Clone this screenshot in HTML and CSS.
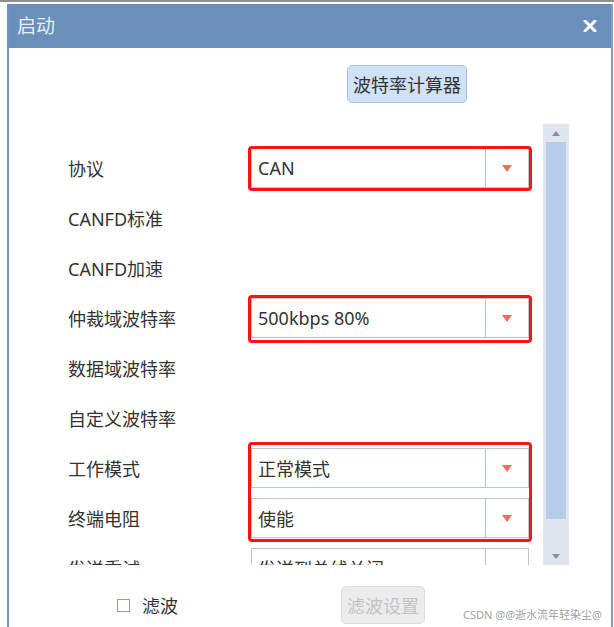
FILE: index.html
```html
<!DOCTYPE html>
<html lang="zh-CN">
<head>
    <meta charset="UTF-8">
    <meta name="viewport" content="width=device-width, initial-scale=1.0">
    <title>启动</title>
    <link rel="stylesheet" href="styles.css">
</head>
<body>
    <div class="top-line"></div>

    <div class="window">
        <div class="title-bar">
            <span class="title">启动</span>
            <svg class="close" width="14" height="12" viewBox="0 0 14 12">
                <path d="M2 1 L12 11 M12 1 L2 11" stroke="#ffffff" stroke-width="3" stroke-linecap="round"/>
            </svg>
        </div>

        <div class="window-body">
            <div class="toolbar">
                <button class="calc-btn">波特率计算器</button>
            </div>

            <div class="scroll-area">
                <div class="form">
                    <div class="row">
                        <span class="label">协议</span>
                        <div class="combo"><span class="value">CAN</span><span class="drop"><i class="arrow"></i></span></div>
                    </div>
                    <div class="row">
                        <span class="label">CANFD标准</span>
                    </div>
                    <div class="row">
                        <span class="label">CANFD加速</span>
                    </div>
                    <div class="row">
                        <span class="label">仲裁域波特率</span>
                        <div class="combo"><span class="value">500kbps 80%</span><span class="drop"><i class="arrow"></i></span></div>
                    </div>
                    <div class="row">
                        <span class="label">数据域波特率</span>
                    </div>
                    <div class="row">
                        <span class="label">自定义波特率</span>
                    </div>
                    <div class="row">
                        <span class="label">工作模式</span>
                        <div class="combo"><span class="value">正常模式</span><span class="drop"><i class="arrow"></i></span></div>
                    </div>
                    <div class="row">
                        <span class="label">终端电阻</span>
                        <div class="combo"><span class="value">使能</span><span class="drop"><i class="arrow"></i></span></div>
                    </div>
                    <div class="row">
                        <span class="label">发送重试</span>
                        <div class="combo"><span class="value">发送到总线关闭</span><span class="drop"><i class="arrow"></i></span></div>
                    </div>

                    <!-- red annotation boxes -->
                    <div class="mark mark-1"></div>
                    <div class="mark mark-2"></div>
                    <div class="mark mark-3"></div>
                </div>

                <div class="scrollbar">
                    <span class="sb-up"></span>
                    <div class="sb-thumb"></div>
                    <span class="sb-down"></span>
                </div>
            </div>

            <div class="footer">
                <label class="check"><span class="box"></span>滤波</label>
                <button class="filter-btn" disabled>滤波设置</button>
            </div>
        </div>
    </div>

    <div class="watermark">CSDN @@逝水流年轻染尘@</div>
</body>
</html>
```

FILE: styles.css
```css
body {
    margin: 0;
    background-color: #ffffff;
    font-family: 'Noto Sans', 'Noto Sans CJK SC', sans-serif;
    color: #333333;
    width: 614px;
    height: 627px;
    overflow: hidden;
    position: relative;
}

.top-line {
    height: 2px;
    background-color: #8e8e8e;
}

.window {
    margin: 2px 0 0 7px;
    width: 606px;
    height: 623px;
    border-left: 2px solid #6f93bf;
    border-right: 2px solid #8a9cb8;
    box-sizing: border-box;
}

.title-bar {
    height: 44px;
    background-color: #6a8fba;
    display: flex;
    align-items: center;
    justify-content: space-between;
    padding: 0 14px 0 8px;
}

.title {
    color: #e9eff6;
    font-size: 19px;
    margin-top: -2px;
}

.close {
    display: block;
}

.toolbar {
    display: flex;
    padding: 17px 0 0 338px;
}

.calc-btn {
    width: 120px;
    height: 38px;
    background-color: #cfe2f8;
    border: 1px solid #a7c1de;
    border-radius: 5px;
    font-family: inherit;
    font-size: 18px;
    color: #333333;
    padding: 0;
}

.scroll-area {
    display: flex;
    margin-top: 21px;
    height: 441px;
}

.form {
    position: relative;
    width: 534px;
    height: 441px;
    overflow: hidden;
    padding: 19px 0 0 59px;
    box-sizing: border-box;
}

.row {
    display: grid;
    grid-template-columns: 183px 278px;
    align-items: center;
    height: 50px;
}

.label {
    font-size: 18px;
}

.combo {
    display: flex;
    height: 40px;
    border: 1px solid #b9c5d5;
    box-sizing: border-box;
    background-color: #ffffff;
}

.value {
    flex: 1;
    display: flex;
    align-items: center;
    padding-left: 6px;
    font-size: 18px;
}

.drop {
    width: 42px;
    border-left: 1px solid #b9c5d5;
    display: flex;
    align-items: center;
    justify-content: center;
}

.arrow {
    width: 0;
    height: 0;
    border-left: 5px solid transparent;
    border-right: 5px solid transparent;
    border-top: 7px solid #f26b5b;
}

.mark {
    position: absolute;
    border: 3px solid #ff1212;
    border-radius: 4px;
    box-sizing: border-box;
    left: 239px;
    width: 284px;
}

.mark-1 {
    top: 22px;
    height: 45px;
}

.mark-2 {
    top: 171px;
    height: 48px;
}

.mark-3 {
    top: 318px;
    height: 100px;
}

.scrollbar {
    width: 26px;
    height: 441px;
    background-color: #dfe6ef;
    display: flex;
    flex-direction: column;
    align-items: center;
}

.sb-up,
.sb-down {
    height: 18px;
    display: flex;
    align-items: center;
    justify-content: center;
}

.sb-up::before,
.sb-down::before {
    content: '';
    width: 0;
    height: 0;
    border-left: 4px solid transparent;
    border-right: 4px solid transparent;
}

.sb-up::before {
    border-bottom: 5px solid #8b8f96;
}

.sb-down::before {
    border-top: 5px solid #8b8f96;
}

.sb-thumb {
    width: 20px;
    height: 377px;
    background-color: #b6cdea;
}

.sb-down {
    margin-top: auto;
}

.footer {
    display: flex;
    align-items: center;
    height: 38px;
    margin-top: 21px;
    padding-left: 108px;
}

.check {
    display: flex;
    align-items: center;
    font-size: 18px;
    width: 224px;
}

.box {
    width: 13px;
    height: 13px;
    border: 1px solid #8d9db2;
    box-sizing: border-box;
    margin-right: 12px;
}

.filter-btn {
    width: 84px;
    height: 38px;
    background-color: #ececec;
    border: 1px solid #dedede;
    border-radius: 5px;
    font-family: inherit;
    font-size: 18px;
    color: #c2c2c2;
    padding: 0;
}

.watermark {
    position: absolute;
    left: 463px;
    top: 606px;
    font-size: 11px;
    white-space: nowrap;
    color: rgba(140, 140, 140, 0.85);
}
```
